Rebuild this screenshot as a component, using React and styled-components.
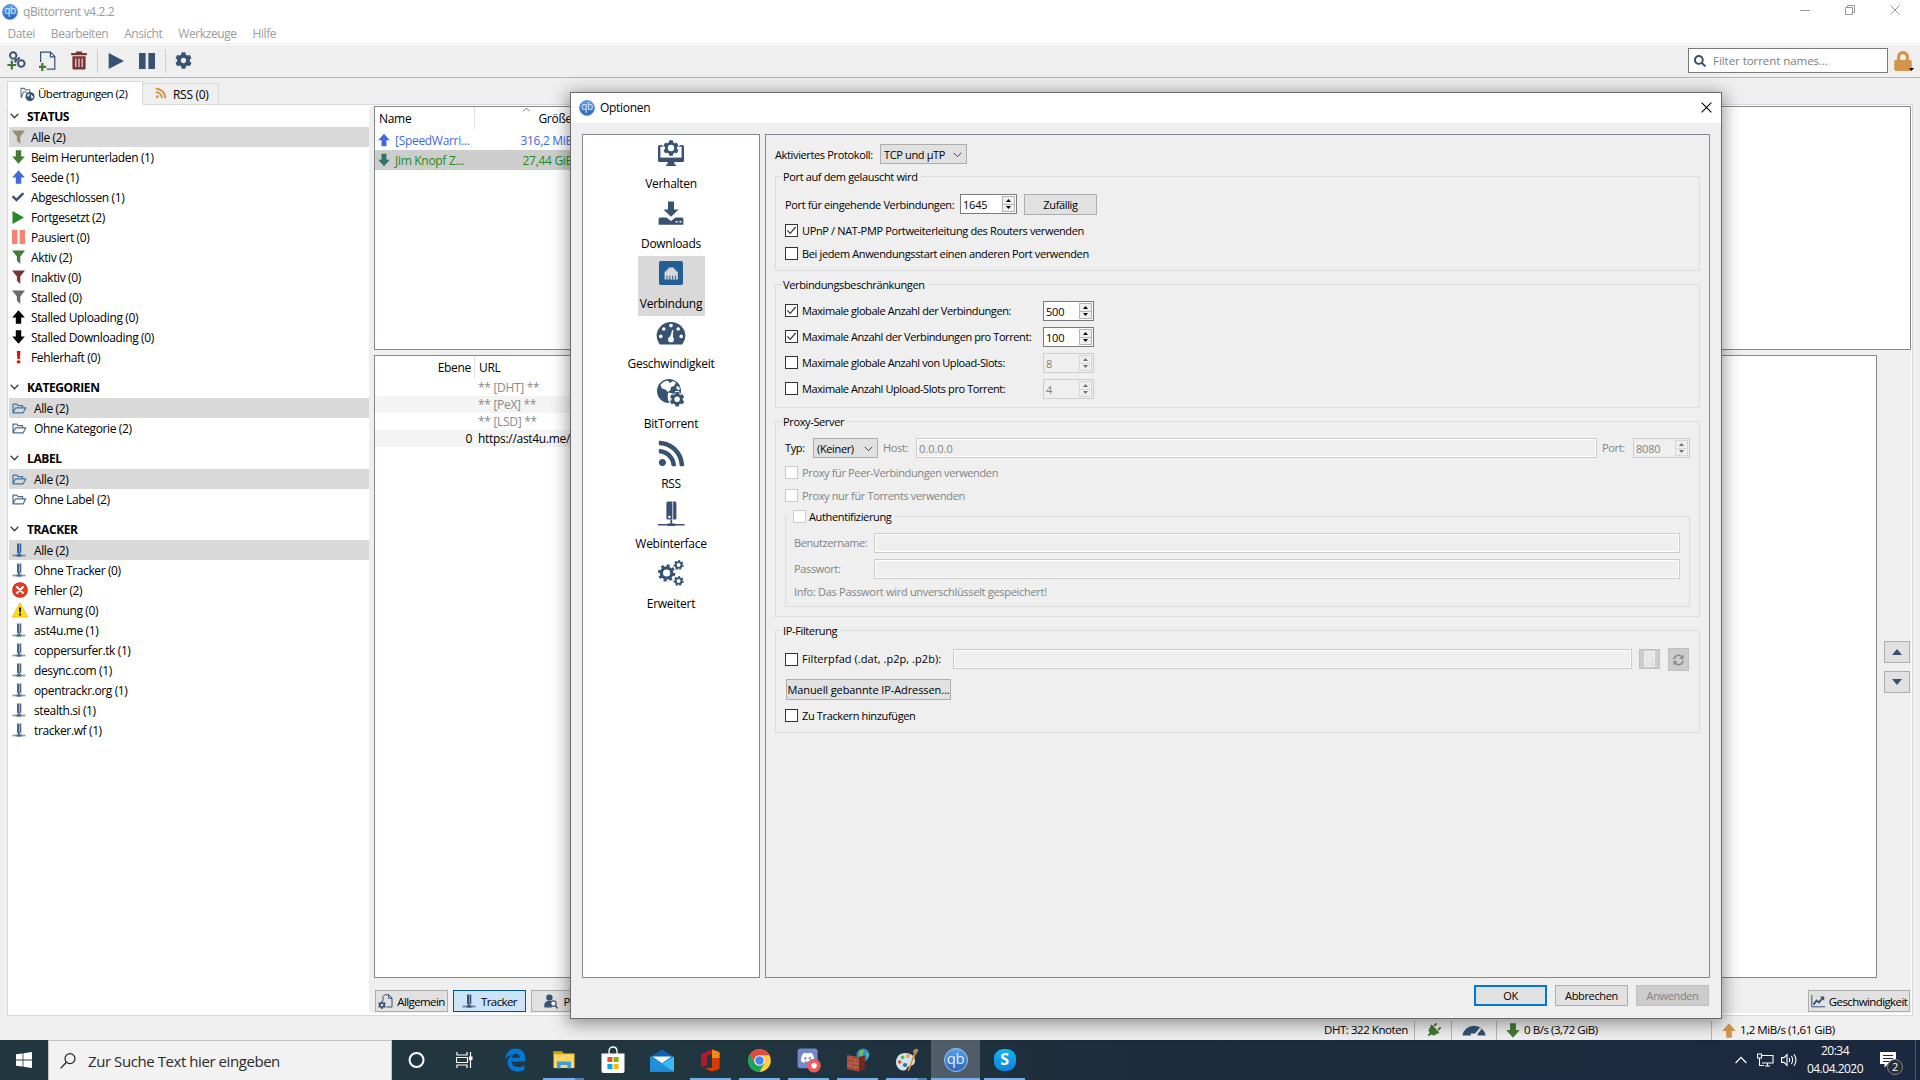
import React from "react";
import styled, { createGlobalStyle, css } from "styled-components";
import {
  FaCog, FaRss, FaLock, FaSearch, FaCheck, FaPlug, FaDiscord,
} from "react-icons/fa";

const navy = "#375273";

const Global = createGlobalStyle`
  * { box-sizing: border-box; }
  body { margin: 0; background: #efefef; overflow: hidden; }
  svg { display: block; flex: none; }
`;

const Desktop = styled.div`
  position: relative;
  width: 1920px;
  height: 1080px;
  overflow: hidden;
  display: flex;
  flex-direction: column;
  font: 12px/16px "Open Sans", "Noto Sans", sans-serif;
  letter-spacing: -0.3px;
  color: #000;
  white-space: nowrap;
`;

/* ---------- icons ---------- */

const Svg = ({ w = 16, h, vb = "0 0 16 16", children, ...rest }) => (
  <svg width={w} height={h || w} viewBox={vb} {...rest}>{children}</svg>
);

const Funnel = ({ color }) => (
  <Svg w={13} h={14} vb="0 0 13 14"><path d="M0 0.5H13L8.3 6.5V14L4.9 10.8V6.5Z" fill={color} /></Svg>
);
const ArrowUp = ({ color, w = 13, h = 14 }) => (
  <Svg w={w} h={h} vb="0 0 13 14"><path d="M6.5 0.3L12.8 7.4H9.2V13.7H3.8V7.4H0.2Z" fill={color} /></Svg>
);
const ArrowDown = ({ color, w = 13, h = 14 }) => (
  <Svg w={w} h={h} vb="0 0 13 14"><path d="M6.5 13.7L12.8 6.6H9.2V0.3H3.8V6.6H0.2Z" fill={color} /></Svg>
);
const PlayIcon = ({ color, w, h }) => (
  <Svg w={w} h={h} vb="0 0 14 14" preserveAspectRatio="none"><path d="M0.6 0L14 7L0.6 14Z" fill={color} /></Svg>
);
const PauseIcon = ({ color, w, h }) => (
  <Svg w={w} h={h} vb="0 0 14 14" preserveAspectRatio="none"><path d="M0 0H5.8V14H0ZM8.2 0H14V14H8.2Z" fill={color} /></Svg>
);
const Exclaim = () => (
  <Svg w={13} h={14} vb="0 0 13 14"><path d="M4.8 1H8.4L7.8 9H5.4ZM4.9 10.6H8.3V13.2H4.9Z" fill="#f00" /></Svg>
);
const FolderIcon = ({ color }) => (
  <Svg w={15} h={13} vb="0 0 15 13">
    <path d="M1 10.5V2.2H4.8L6 3.6H10.6V5.6M1 10.8L3.6 5.8H13.8L11.2 10.8Z" fill="none" stroke={color} strokeWidth="1.2" strokeLinejoin="round" />
  </Svg>
);
const ServerIcon = ({ color = navy }) => (
  <Svg w={30} h={28} vb="0 0 30 28">
    <path d="M12 2.4H16.4V20.6H12Q10.4 20.6 10.4 19V4Q10.4 2.400 12 2.400Z" fill={color} />
    <path d="M17.2 2.4H19Q20.4 2.4 20.4 4V19Q20.4 20.600 19 20.600H17.200Z" fill={color} />
    <circle cx="13.4" cy="18" r="1.3" fill="#fff" />
    <path d="M14.400 20.600H16.200V25H14.400ZM2 25H28.600V26.600H2ZM11.400 24.400H19.200V27H11.400Z" fill={color} />
  </Svg>
);
const ServerMini = ({ color = "#4c6484" }) => (
  <Svg w={14} h={14} vb="0 0 14 14">
    <path d="M5 0.5H7.5V10H5ZM8 0.5H9.3V10H8Z" fill={color} />
    <path d="M6 10H8V11.500H6Z" fill={color} />
    <path d="M0.500 11.600H13.500V13.400H0.500Z" fill={color} opacity="0.65" />
    <path d="M4.600 11.400H9.400V13.600H4.600Z" fill={color} />
  </Svg>
);
const ErrorIcon = () => (
  <Svg>
    <circle cx="8" cy="8" r="7.8" fill="#b92617" /><circle cx="8" cy="8" r="6.9" fill="#ee3a20" />
    <path d="M5 5L11 11M11 5L5 11" stroke="#fff" strokeWidth="2.1" strokeLinecap="round" />
  </Svg>
);
const WarnIcon = () => (
  <Svg>
    <path d="M8 0.8L15.6 15H0.4Z" fill="#ffdd0e" stroke="#efb21a" strokeWidth="0.8" strokeLinejoin="round" />
    <path d="M7 5.4H9L8.7 10.6H7.3ZM7.1 11.6H8.9V13.4H7.1Z" fill="#000" />
  </Svg>
);
const Chevron = ({ color = "#3c3c3c", w = 9, h = 6, sw = 1.3 }) => (
  <Svg w={w} h={h} vb="0 0 9 6"><path d="M0.7 0.8L4.5 4.7L8.3 0.8" fill="none" stroke={color} strokeWidth={sw} /></Svg>
);
const CloseX = ({ color, s = 11 }) => (
  <Svg w={s} vb="0 0 11 11"><path d="M0.6 0.6L10.4 10.4M10.4 0.6L0.6 10.4" stroke={color} strokeWidth="1.1" /></Svg>
);
const LinkAdd = () => (
  <Svg w={19} h={19} vb="0 0 19 19">
    <g fill="none" stroke={navy} strokeWidth="1.9">
      <circle cx="6.200" cy="4.400" r="3.200" /><circle cx="14.300" cy="12.600" r="3.300" />
      <path d="M7.400 8.800Q11.400 9.400 12.400 6.200M8.400 11.800Q8.200 8.600 11.400 8" />
    </g>
    <path d="M3.700 9.600H6V12.900H9.200V15.100H6V18.400H3.700V15.100H0.400V12.900H3.700Z" fill="#437a35" />
  </Svg>
);
const FileAdd = () => (
  <Svg w={17} h={20} vb="0 0 17 20">
    <path d="M1.600 11V1.200H11.600L15.800 5.400V18.200H7.800M11.400 1.200V5.800H15.800" fill="none" stroke={navy} strokeWidth="1.200" />
    <path d="M2.200 12H4.400V14.800H7.200V17H4.400V20H2.200V17H0V14.800H2.200Z" fill="#437a35" />
  </Svg>
);
const Trash = () => (
  <Svg w={16} h={19} vb="0 0 16 19">
    <path d="M5 2V0.500H11V2H15.800V4.200H0.200V2ZM1.400 5.200H14.600V17.200Q14.600 18.600 13.200 18.600H2.800Q1.400 18.600 1.400 17.200Z" fill="#7a3434" />
    <path d="M4.800 7.400V16M8 7.400V16M11.200 7.400V16" stroke="#e5d5d4" strokeWidth="1.300" />
  </Svg>
);
const TransferIcon = () => (
  <Svg w={15} h={15} vb="0 0 15 15">
    <path d="M1 10.500V1.400H4.400L5.400 2.800H9.800V5M1.200 11L3.400 5H7" fill="none" stroke="#5b728f" strokeWidth="1.100" />
    <circle cx="10" cy="9.600" r="4.600" fill={navy} />
    <path d="M7 8.300Q8.500 6 10 7Q9 10 7.800 10ZM11 7.500L13.600 10L12 12Q10.400 10.600 11 7.500Z" fill="#dfe6ef" />
  </Svg>
);
const MonitorCog = () => (
  <Svg w={28} h={28} vb="0 0 28 28">
    <rect x="1" y="6" width="26" height="17" rx="1.600" fill={navy} />
    <rect x="3.400" y="7.600" width="21.200" height="11" fill="#fff" />
    <path d="M10.600 23H17.400V25.600H19V27H9V25.600H10.600Z" fill={navy} />
    <FaCog x="4.500" y="-0.500" size="19" color="#fff" />
    <FaCog x="6" y="1" size="16" color={navy} />
    <circle cx="14" cy="9" r="3.200" fill="#fff" />
  </Svg>
);
const DownloadIcon = () => (
  <Svg w={28} h={28} vb="0 0 28 28">
    <path d="M11 2.400H17V10.400H21.600L14 17.800L6.400 10.400H11Z" fill={navy} />
    <path d="M2.600 18.600H9.400L14 22L18.600 18.600H25.400L26.400 20V25.800H1.600V20Z" fill={navy} />
    <path d="M18.600 22.700H20.600M22.400 22.700H24.400" stroke="#fff" strokeWidth="1.600" />
  </Svg>
);
const EthernetIcon = () => (
  <Svg w={28} h={28} vb="0 0 28 28">
    <rect x="2" y="2" width="24" height="24" rx="1.800" fill="#255e93" />
    <path d="M7.600 20.600V12.400H9.400V10.400H11.400V8.400H17V10.400H19V12.400H20.800V20.600Z" fill="#d9d9d9" />
    <path d="M10 16.600V20.600M12.800 16.600V20.600M15.600 16.600V20.600M18.400 16.600V20.600" stroke="#255e93" strokeWidth="1" />
  </Svg>
);
const GaugeIcon = () => (
  <Svg w={30} h={28} vb="0 0 30 28">
    <path d="M3.800 25.400A14.400 13.800 0 1 1 26.200 25.400Z" fill={navy} />
    <g fill="#fff">
      <circle cx="4.800" cy="17.400" r="1.800" /><circle cx="7.800" cy="10" r="1.800" /><circle cx="15" cy="6.600" r="1.800" />
      <circle cx="22.200" cy="10" r="1.800" /><circle cx="25.200" cy="17.400" r="1.800" /><circle cx="15" cy="20.400" r="2.900" />
      <path d="M13.800 19L16.200 11L17.400 11.300L16.600 20Z" />
    </g>
  </Svg>
);
const GlobeCog = () => (
  <Svg w={30} h={30} vb="0 0 30 30">
    <circle cx="13" cy="13" r="12" fill={navy} />
    <path d="M4.400 7Q8 2.600 12 2.800L14 5L17 3L20 4.400L18 8L15 9L14.400 12L12 14L9.400 11.400L6 10.400ZM12.400 14.400L17 15.600L15.600 20L13 24Q10.600 19 12.400 14.400ZM20.400 8L23.400 9L23.800 12L20.800 11.400Z" fill="#fff" />
    <FaCog x="12.400" y="12.600" size="17.400" color="#fff" />
    <FaCog x="13.600" y="13.800" size="15" color={navy} />
    <circle cx="21.100" cy="21.300" r="2.700" fill="#fff" />
  </Svg>
);
const GearsIcon = () => (
  <Svg w={28} h={28} vb="0 0 28 28">
    <circle cx="9.600" cy="14" r="5.200" fill="none" stroke={navy} strokeWidth="3.200" />
    <circle cx="9.600" cy="14" r="7.200" fill="none" stroke={navy} strokeWidth="3" strokeDasharray="2.830 2.820" />
    {[6, 22].map((cy) => (
      <g key={cy} fill="none" stroke={navy}>
        <circle cx="21.600" cy={cy} r="2.900" strokeWidth="1.900" />
        <circle cx="21.600" cy={cy} r="4.200" strokeWidth="1.800" strokeDasharray="1.880 1.890" />
      </g>
    ))}
  </Svg>
);
const DocCog = () => (
  <Svg w={15} h={15} vb="0 0 15 15">
    <path d="M5 7V2.400L6.600 0.800H10.800L14 4V13H8.400M10.600 0.800V4.200H14" fill="none" stroke={navy} strokeWidth="1" />
    <FaCog x="0" y="7" size="8" color={navy} />
  </Svg>
);
const PeerIcon = () => (
  <Svg w={14} h={15} vb="0 0 14 15">
    <circle cx="5.400" cy="3.600" r="3.200" fill={navy} /><path d="M0.400 13.400V9.800Q1 7.400 3.600 7H7L8 13.400Z" fill={navy} />
    <circle cx="9.400" cy="9.600" r="2.700" fill="#fff" stroke={navy} strokeWidth="1.200" /><path d="M11.200 11.600L13.600 14.400" stroke={navy} strokeWidth="1.500" />
  </Svg>
);
const ChartIcon = () => (
  <Svg w={14} h={13} vb="0 0 14 13">
    <path d="M0.800 0V11.800H14" fill="none" stroke={navy} strokeWidth="1" />
    <path d="M2.400 9.600L5.600 5.600L8 7.400L12 2.600" fill="none" stroke={navy} strokeWidth="1.900" /><path d="M9 1.600H13.200V5.800Z" fill={navy} />
  </Svg>
);
const HalfGauge = () => (
  <Svg w={24} h={12} vb="0 0 24 12">
    <path d="M0.400 11.600A11.700 11.400 0 0 1 23.600 11.600H15.400L16 9.600H8.600L9 11.600Z" fill={navy} />
    <path d="M12.600 11.600L18.800 4.400" stroke="#efefef" strokeWidth="2.200" /><path d="M10.800 11.600A2.300 2.300 0 0 1 14.400 11.600Z" fill="#efefef" />
  </Svg>
);

const QbBadge = styled.span`
  flex: none;
  display: flex;
  align-items: center;
  justify-content: center;
  width: ${(p) => p.$s}px;
  height: ${(p) => p.$s}px;
  border-radius: 50%;
  border: ${(p) => (p.$s > 20 ? "1.5px solid #9fc6f3" : "1px solid #5c97dd")};
  background: linear-gradient(#5b9ee9, #2b66bd);
  color: #e3effc;
  font-size: ${(p) => p.$s * 0.62}px;
  line-height: 1;
  letter-spacing: -0.4px;
  padding-bottom: ${(p) => p.$s * 0.1}px;
`;

/* ---------- main window ---------- */

const AppWindow = styled.div`
  height: 1040px;
  display: flex;
  flex-direction: column;
  background: #efefef;
`;
const TitleBar = styled.div`
  height: 24px;
  background: #fff;
  display: flex;
  align-items: center;
  padding-left: 2px;
  color: #999;
`;
const TitleText = styled.span`
  margin-left: 5px;
  flex: 1;
  letter-spacing: -0.38px;
`;
const WindowButtons = styled.div`
  display: flex;
  align-items: center;
  gap: 35px;
  padding: 0 20px 4px 0;
`;
const MenuBar = styled.div`
  height: 19px;
  background: #fff;
  display: flex;
  align-items: center;
  gap: 16px;
  padding: 0 0 0 7.5px;
  color: #9c9c9c;
  letter-spacing: -0.42px;
`;
const ToolBar = styled.div`
  height: 35px;
  border-top: 1px solid #ececec;
  border-bottom: 1px solid #b8b8b8;
  box-shadow: inset 0 1px 0 #fff;
  display: flex;
  align-items: center;
  padding: 0 5px 0 7px;
`;
const Tool = styled.span`
  width: ${(p) => p.$w}px;
  flex: none;
`;
const ToolSep = styled.span`
  width: 1px;
  height: 24px;
  margin-right: ${(p) => p.$mr}px;
  background: #cfcfcf;
`;
const FilterBox = styled.div`
  margin-left: auto;
  width: 200px;
  height: 25px;
  margin-right: 6px;
  border: 1px solid #7a7a7a;
  background: #fff;
  display: flex;
  align-items: center;
  gap: 7px;
  padding-left: 5px;
  font-size: 11.5px;
  letter-spacing: -0.05px;
  color: #7d7d7d;
`;
const LockWrap = styled.div`
  display: flex;
  align-items: flex-end;
  width: 22px;
  margin-left: -1px;
  svg + svg { margin: 0 0 0 -4px; }
`;

const TabRow = styled.div`
  height: 26px;
  display: flex;
  align-items: flex-end;
  padding-left: 7px;
`;
const Tab = styled.div`
  position: relative;
  z-index: 1;
  display: flex;
  align-items: center;
  border: 1px solid #d9d9d9;
  ${(p) => p.$on
    ? css`height: 24px; width: 136px; margin-bottom: -1px; background: #fff; border-bottom-color: #fff; padding: 2px 0 0 12px; gap: 3px; font-size: 11.5px; letter-spacing: -0.52px;`
    : css`height: 21px; width: 76px; border-left: 0; border-bottom: 0; padding: 2px 0 0 12px; gap: 6px; svg { margin-top: -4px; }`}
`;
const Pane = styled.div`
  height: 912px;
  width: 1906px;
  margin-left: 7px;
  border: 1px solid #d9d9d9;
  background: #fff;
  padding: 1px 1px 2px;
  display: flex;
`;
const Sidebar = styled.div`
  width: 360px;
  padding-top: 1px;
`;
const SideHead = styled.div`
  height: ${(p) => p.$h || 31}px;
  display: flex;
  align-items: flex-end;
  gap: 8px;
  padding: 0 0 2px 1px;
  font-weight: 700;
  letter-spacing: -0.4px;
  svg { margin-bottom: 6px; }
`;
const SideRow = styled.div`
  height: 20px;
  display: flex;
  align-items: center;
  background: ${(p) => (p.$on ? "#d9d9d9" : "none")};
  padding: 2px 0 0 3px;
  letter-spacing: -0.38px;
`;
const SideIcon = styled.span`
  width: ${(p) => p.$w}px;
  flex: none;
  display: flex;
  margin-top: -2px;
`;
const RightCol = styled.div`
  width: 1542px;
  padding-left: 5px;
  background: #efefef;
`;
const ListFrame = styled.div`
  width: ${(p) => p.$w}px;
  height: ${(p) => p.$h}px;
  border: 1px solid #828790;
  background: #fff;
`;
const ListHead = styled.div`
  height: 23px;
  display: flex;
`;
const HeadCell = styled.div`
  width: ${(p) => p.$w}px;
  padding: ${(p) => p.$p || "4px 4px 0"};
  text-align: ${(p) => p.$a || "left"};
  border-right: ${(p) => (p.$line ? "1px solid #e3e3e3" : "0")};
`;
const SortMark = styled.div`
  display: flex;
  justify-content: center;
  padding-left: 6px;
  height: 4px;
  svg { transform: rotate(180deg); }
`;
const TorrentRow = styled.div`
  width: 500px;
  height: 20px;
  display: flex;
  align-items: center;
  padding-left: 3px;
  color: ${(p) => p.$c};
  background: ${(p) => (p.$on ? "#cdcdcd" : "none")};
  span { padding-top: 2px; }
`;
const TorrentName = styled.span`
  width: 80px;
  margin-left: 5px;
`;
const TorrentSize = styled.span`
  width: 98px;
  text-align: right;
`;
const TrackRow = styled.div`
  width: 500px;
  height: 17px;
  line-height: 17px;
  display: flex;
  gap: 6px;
  color: ${(p) => (p.$dark ? "#000" : "#8a8a8a")};
  background: ${(p) => (p.$alt ? "#f4f4f4" : "#fff")};
`;
const TrackTier = styled.span`
  width: 97px;
  text-align: right;
`;
const LowerRow = styled.div`
  display: flex;
  margin-top: 5px;
`;
const MoveButtons = styled.div`
  display: flex;
  flex-direction: column;
  gap: 8px;
  padding: 286px 0 0 7px;
`;
const FlatButton = styled.div`
  width: ${(p) => p.$w}px;
  height: ${(p) => p.$h || 22}px;
  display: flex;
  align-items: center;
  justify-content: center;
  gap: ${(p) => p.$gap || 0}px;
  background: #e1e1e1;
  border: 1px solid #adadad;
  ${(p) => p.$on && css`background: #cce4f7; border-color: #005499;`}
  ${(p) => p.$default && css`border: 2px solid #0078d7;`}
  ${(p) => p.$off && css`background: #cccccc; border-color: #bfbfbf; color: #838383;`}
`;
const DetailButtons = styled.div`
  display: flex;
  gap: 5px;
  padding: 12px 1px 0 1px;
  font-size: 11.5px;
  letter-spacing: -0.6px;
  > div { padding-top: 2px; }
  svg { margin-top: -2px; }
  > :last-child { margin-left: auto; }
`;
const StatusBar = styled.div`
  height: 24px;
  display: flex;
  align-items: center;
  padding: 4px 0 0 1324px;
`;
const StatusItem = styled.div`
  width: ${(p) => p.$w}px;
  display: flex;
  align-items: center;
  gap: 4px;
  padding-left: ${(p) => p.$pl || 0}px;
  font-size: 11.5px;
  letter-spacing: -0.45px;
  height: 19px;
  border-right: ${(p) => (p.$line ? "1px solid #b5b5b5" : 0)};
`;

/* ---------- dialog ---------- */

const Dialog = styled.div`
  position: absolute;
  left: 570px;
  top: 92px;
  width: 1152px;
  height: 927px;
  border: 1px solid #6b6b6b;
  background: #efefef;
  box-shadow: 0 3px 16px 2px rgba(0, 0, 0, 0.4);
  display: flex;
  flex-direction: column;
  font-size: 11px;
  letter-spacing: -0.36px;
`;
const DialogTitle = styled.div`
  height: 30px;
  flex: none;
  background: #fff;
  display: flex;
  align-items: center;
  gap: 5px;
  padding: 0 9px 0 8px;
  font-size: 12px;
  letter-spacing: -0.3px;
  > :last-child { margin-left: auto; margin-top: -2px; }
`;
const DialogBody = styled.div`
  display: flex;
  gap: 5px;
  padding: 11px 0 0 11px;
`;
const NavList = styled.div`
  width: 178px;
  height: 844px;
  border: 1px solid #828790;
  background: #fff;
  padding-top: 1px;
  display: flex;
  flex-direction: column;
  align-items: center;
  font-size: 12px;
  letter-spacing: -0.28px;
`;
const NavItem = styled.div`
  height: 60px;
  min-width: 67px;
  display: flex;
  flex-direction: column;
  align-items: center;
  justify-content: space-between;
  padding: 2px 0 4px;
  background: ${(p) => (p.$on ? "#d9d9d9" : "none")};
`;
const NavIcon = styled.span`
  height: 30px;
  display: flex;
  align-items: center;
`;
const Panel = styled.div`
  width: 945px;
  height: 844px;
  border: 1px solid #828790;
  padding: 9px 9px 0;
`;
const Row = styled.div`
  display: flex;
  align-items: center;
  height: ${(p) => p.$h || 20}px;
  margin-top: ${(p) => p.$mt || 0}px;
  color: ${(p) => (p.$off ? "#838383" : "#000")};
`;
const Label = styled.span`
  width: ${(p) => p.$w}px;
  flex: none;
  padding-top: ${(p) => p.$pt || 0}px;
  color: ${(p) => (p.$off ? "#838383" : "inherit")};
  letter-spacing: ${(p) => (p.$ls === undefined ? "inherit" : `${p.$ls}px`)};
`;
const Combo = styled.div`
  width: ${(p) => p.$w}px;
  height: 20px;
  border: 1px solid #adadad;
  background: #e1e1e1;
  display: flex;
  align-items: center;
  justify-content: space-between;
  padding: 1px 4px 0 3px;
  margin-right: ${(p) => p.$mr || 0}px;
`;
const SpinFrame = styled.div`
  width: ${(p) => p.$w}px;
  height: 20px;
  border: 1px solid ${(p) => (p.$off ? "#cccccc" : "#7a7a7a")};
  background: ${(p) => (p.$off ? "#efefef" : "#fff")};
  color: ${(p) => (p.$off ? "#838383" : "#000")};
  display: flex;
  align-items: center;
  justify-content: space-between;
  padding: 0 1px 0 2px;
  letter-spacing: -0.2px;
  > span { padding-top: 1px; }
`;
const SpinButtons = styled.div`
  display: grid;
  grid-template-rows: 7px 7px;
  height: 16px;
  width: 13px;
  border: 1px solid ${(p) => (p.$off ? "#d6d6d6" : "#b4b4b4")};
  background: linear-gradient(transparent 7px, ${(p) => (p.$off ? "#d6d6d6" : "#b4b4b4")} 7px 8px, transparent 8px), #efefef;
  svg { margin: auto; }
`;
const Group = styled.div`
  height: ${(p) => p.$h}px;
  margin-top: ${(p) => p.$mt}px;
  border: 1px solid #dcdcdc;
  padding: 0 ${(p) => p.$px || 9}px;
`;
const GroupTitle = styled.div`
  width: fit-content;
  height: 16px;
  margin: -8px 0 0 ${(p) => (p.$ml === undefined ? -3 : p.$ml)}px;
  padding: 0 3px 0 ${(p) => p.$pl || 1}px;
  background: #efefef;
  display: flex;
  align-items: center;
`;
const Box = styled.span`
  width: 13px;
  height: 13px;
  flex: none;
  margin: 0 ${(p) => p.$mr || 4}px ${(p) => (p.$mb === undefined ? 1 : p.$mb)}px 0;
  border: 1px solid ${(p) => (p.$off ? "#cccccc" : "#333")};
  background: #fff;
`;
const Input = styled.div`
  width: ${(p) => p.$w}px;
  height: 20px;
  border: 1px solid #cccccc;
  box-shadow: inset 0 0 0 1px #fff;
  background: #efefef;
  color: #838383;
  padding: 2px 2px 0;
  letter-spacing: 0;
  margin-right: ${(p) => p.$mr || 0}px;
`;
const DialogButtons = styled.div`
  display: flex;
  justify-content: flex-end;
  gap: 8px;
  padding: 7px 12px 0 0;
`;
const RandomButton = styled(FlatButton)`
  margin-left: 7px;
  padding-top: 1px;
`;
const RefreshButton = styled(FlatButton)`
  margin-left: 8px;
  align-self: flex-start;
`;
const BanButton = styled(FlatButton)`
  margin-left: 1px;
  letter-spacing: -0.1px;
`;

const Spin = ({ w, value, off }) => (
  <SpinFrame $w={w} $off={off}>
    <span>{value}</span>
    <SpinButtons $off={off}>
      <Svg w={5} h={3} vb="0 0 5 3"><path d="M0 3L2.500 0L5 3Z" fill={off ? "#6f6f6f" : "#000"} /></Svg>
      <Svg w={5} h={3} vb="0 0 5 3"><path d="M0 0L2.500 3L5 0Z" fill={off ? "#6f6f6f" : "#000"} /></Svg>
    </SpinButtons>
  </SpinFrame>
);
const Check = ({ on, off, children, w, ls, mb }) => (
  <>
    <Box $off={off} $mb={mb}>{on && <Svg w={11} vb="0 0 11 11"><path d="M1.400 5.400L4.200 8.400L9.600 2" fill="none" stroke="#333" strokeWidth="1.200" /></Svg>}</Box>
    <Label $w={w} $ls={ls}>{children}</Label>
  </>
);

/* ---------- taskbar ---------- */

const Taskbar = styled.div`
  height: 40px;
  display: flex;
  background: linear-gradient(90deg, #213840 0%, #21363f 35%, #1d2c3d 60%, #1b2940 100%);
  color: #fff;
`;
const StartButton = styled.div`
  width: 48px;
  padding: 12px 0 0 16px;
`;
const SearchBox = styled.div`
  width: 344px;
  display: flex;
  align-items: center;
  gap: 12px;
  padding: 0 0 0 11px;
  background: #f2f2f2;
  border: 1px solid #c3c3c3;
  border-bottom: 0;
  color: #2b2b2b;
  font-size: 15px;
  letter-spacing: -0.43px;
`;
const TaskItem = styled.div`
  position: relative;
  width: 49px;
  display: flex;
  align-items: center;
  justify-content: center;
  background: ${(p) => (p.$active ? "rgba(255,255,255,0.22)" : "none")};
  &::after {
    content: "";
    display: ${(p) => (p.$run ? "block" : "none")};
    position: absolute;
    bottom: 0;
    left: ${(p) => (p.$active ? 0 : 4)}px;
    right: ${(p) => (p.$active ? 0 : 4)}px;
    height: 2px;
    background: ${(p) => (p.$multi ? "linear-gradient(90deg,#74b0f4 0 32px,#4f80b8 32px)" : "#74b0f4")};
  }
`;
const Tray = styled.div`
  margin-left: auto;
  display: flex;
  align-items: center;
  padding-right: 4px;
`;
const TrayGlyph = styled.span`
  width: ${(p) => p.$w}px;
  display: flex;
`;
const Clock = styled.div`
  width: 74px;
  text-align: center;
  line-height: 18px;
  letter-spacing: -0.5px;
  margin: 0 8px 0 0;
`;
const Notify = styled.div`
  position: relative;
  width: 36px;
  height: 40px;
  padding: 12px 0 0;
  border-right: 1px solid #4c5868;
`;
const NotifyCount = styled.span`
  position: absolute;
  left: 7px;
  top: 19px;
  width: 16px;
  height: 16px;
  border-radius: 50%;
  border: 1px solid #7d838c;
  background: #2a2d33;
  font-size: 11px;
  line-height: 14px;
  text-align: center;
`;
const SkypeMark = styled.span`
  width: 22px;
  height: 22px;
  border-radius: 9px;
  background: linear-gradient(#14b4f4, #0a84dc);
  font: 700 16px/21px "Open Sans", sans-serif;
  text-align: center;
`;

const statusRows = [
  [<Funnel color="#998d74" />, "Alle (2)"],
  [<ArrowDown color="#437a35" />, "Beim Herunterladen (1)"],
  [<ArrowUp color="#4169e1" />, "Seede (1)"],
  [<FaCheck size={12} color={navy} />, "Abgeschlossen (1)"],
  [<PlayIcon color="#228b22" w={12} h={13} />, "Fortgesetzt (2)"],
  [<PauseIcon color="#fa8072" w={13} h={14} />, "Pausiert (0)"],
  [<Funnel color="#437a35" />, "Aktiv (2)"],
  [<Funnel color="#7a3434" />, "Inaktiv (0)"],
  [<Funnel color="#6b6b6b" />, "Stalled (0)"],
  [<ArrowUp color="#000" />, "Stalled Uploading (0)"],
  [<ArrowDown color="#000" />, "Stalled Downloading (0)"],
  [<Exclaim />, "Fehlerhaft (0)"],
];
const trackerRows = [
  ["Alle (2)"], ["Ohne Tracker (0)"], ["Fehler (2)", "e"], ["Warnung (0)", "w"], ["ast4u.me (1)"],
  ["coppersurfer.tk (1)"], ["desync.com (1)"], ["opentrackr.org (1)"], ["stealth.si (1)"], ["tracker.wf (1)"],
];
const navItems = [
  ["Verhalten", <MonitorCog />], ["Downloads", <DownloadIcon />], ["Verbindung", <EthernetIcon />],
  ["Geschwindigkeit", <GaugeIcon />], ["BitTorrent", <GlobeCog />], ["RSS", <FaRss size={29} color={navy} />],
  ["Webinterface", <ServerIcon />], ["Erweitert", <GearsIcon />],
];

const FolderSection = ({ title, rows }) => (
  <>
    <SideHead><Chevron />{title}</SideHead>
    {rows.map((r, i) => (
      <SideRow key={r} $on={i === 0}>
        <SideIcon $w={22}><FolderIcon color={i === 0 ? "#3f74a4" : "#526c8c"} /></SideIcon>{r}
      </SideRow>
    ))}
  </>
);

const SideNav = () => (
  <Sidebar>
    <SideHead $h={20}><Chevron />STATUS</SideHead>
    {statusRows.map(([icon, text], i) => (
      <SideRow key={text} $on={i === 0}><SideIcon $w={19}>{icon}</SideIcon>{text}</SideRow>
    ))}
    <FolderSection title="KATEGORIEN" rows={["Alle (2)", "Ohne Kategorie (2)"]} />
    <FolderSection title="LABEL" rows={["Alle (2)", "Ohne Label (2)"]} />
    <SideHead><Chevron />TRACKER</SideHead>
    {trackerRows.map(([text, kind], i) => (
      <SideRow key={text} $on={i === 0}>
        <SideIcon $w={22}>
          {kind === "e" ? <ErrorIcon /> : kind === "w" ? <WarnIcon /> : <ServerMini color={i ? "#4c6484" : "#2f6596"} />}
        </SideIcon>{text}
      </SideRow>
    ))}
  </Sidebar>
);

const MainPane = () => (
  <RightCol>
    <ListFrame $w={1537} $h={244}>
      <ListHead>
        <HeadCell $w={100} $line>Name</HeadCell>
        <HeadCell $w={100} $p="0 3px 0 0" $a="right">
          <SortMark><Chevron w={9} h={5} color="#555" sw={1} /></SortMark>Größe
        </HeadCell>
      </ListHead>
      <TorrentRow $c="#4169e1"><ArrowUp color="#4169e1" w={12} /><TorrentName>[SpeedWarri...</TorrentName><TorrentSize>316,2 MiB</TorrentSize></TorrentRow>
      <TorrentRow $c="#228b22" $on><ArrowDown color="#2f7566" w={12} /><TorrentName>Jim Knopf Z...</TorrentName><TorrentSize>27,44 GiB</TorrentSize></TorrentRow>
    </ListFrame>
    <LowerRow>
      <ListFrame $w={1503} $h={623}>
        <ListHead>
          <HeadCell $w={100} $a="right" $p="4px 3px 0" $line>Ebene</HeadCell>
          <HeadCell $w={100} $p="4px 4px 0">URL</HeadCell>
        </ListHead>
        {["DHT", "PeX", "LSD"].map((n, i) => (
          <TrackRow key={n} $alt={i === 1}><TrackTier /><span>** [{n}] **</span></TrackRow>
        ))}
        <TrackRow $alt $dark><TrackTier>0</TrackTier><span>https://ast4u.me/</span></TrackRow>
      </ListFrame>
      <MoveButtons>
        <FlatButton $w={26}><Svg w={10} h={6} vb="0 0 10 6"><path d="M0 6L5 0L10 6Z" fill={navy} /></Svg></FlatButton>
        <FlatButton $w={26}><Svg w={10} h={6} vb="0 0 10 6"><path d="M0 0L5 6L10 0Z" fill={navy} /></Svg></FlatButton>
      </MoveButtons>
    </LowerRow>
    <DetailButtons>
      <FlatButton $w={73} $gap={4}><DocCog />Allgemein</FlatButton>
      <FlatButton $w={73} $gap={5} $on><ServerMini color={navy} />Tracker</FlatButton>
      <FlatButton $w={73} $gap={5}><PeerIcon />Peers</FlatButton>
      <FlatButton $w={102} $gap={4}><ChartIcon />Geschwindigkeit</FlatButton>
    </DetailButtons>
  </RightCol>
);

const Limit = ({ on, text, value, mt }) => (
  <Row $mt={mt}><Check on={on} w={241} ls={-0.41}>{text}</Check><Spin w={51} value={value} off={!on} /></Row>
);

const OptionsDialog = () => (
  <Dialog>
    <DialogTitle><QbBadge $s={16}>qb</QbBadge><span>Optionen</span><CloseX color="#000" /></DialogTitle>
    <DialogBody>
      <NavList>
        {navItems.map(([t, icon]) => (
          <NavItem key={t} $on={t === "Verbindung"}><NavIcon>{icon}</NavIcon>{t}</NavItem>
        ))}
      </NavList>
      <Panel>
        <Row>
          <Label $w={105} $pt={2}>Aktiviertes Protokoll:</Label>
          <Combo $w={87}>TCP und µTP<Chevron color="#444" sw={1} /></Combo>
        </Row>
        <Group $mt={12} $h={95}>
          <GroupTitle>Port auf dem gelauscht wird</GroupTitle>
          <Row $mt={9}>
            <Label $w={175} $pt={2}>Port für eingehende Verbindungen:</Label>
            <Spin w={57} value="1645" />
            <RandomButton $w={73} $h={21}>Zufällig</RandomButton>
          </Row>
          <Row $mt={7}><Check on>UPnP / NAT-PMP Portweiterleitung des Routers verwenden</Check></Row>
          <Row $mt={3}><Check>Bei jedem Anwendungsstart einen anderen Port verwenden</Check></Row>
        </Group>
        <Group $mt={13} $h={124}>
          <GroupTitle>Verbindungsbeschränkungen</GroupTitle>
          <Limit mt={8} on text="Maximale globale Anzahl der Verbindungen:" value="500" />
          <Limit mt={6} on text="Maximale Anzahl der Verbindungen pro Torrent:" value="100" />
          <Limit mt={6} text="Maximale globale Anzahl von Upload-Slots:" value="8" />
          <Limit mt={6} text="Maximale Anzahl Upload-Slots pro Torrent:" value="4" />
        </Group>
        <Group $mt={13} $h={196}>
          <GroupTitle>Proxy-Server</GroupTitle>
          <Row $mt={8}>
            <Label $w={28}>Typ:</Label>
            <Combo $w={65} $mr={5}>(Keiner)<Chevron color="#444" sw={1} /></Combo>
            <Label $w={33} $off>Host:</Label>
            <Input $w={681} $mr={5}>0.0.0.0</Input>
            <Label $w={31} $off>Port:</Label>
            <Spin w={57} value="8080" off />
          </Row>
          <Row $mt={5} $off><Check off>Proxy für Peer-Verbindungen verwenden</Check></Row>
          <Row $mt={3} $off><Check off>Proxy nur für Torrents verwenden</Check></Row>
          <Group $mt={10} $h={91} $px={8}>
            <GroupTitle $ml={-5} $pl={4}><Box $off $mr={3} />Authentifizierung</GroupTitle>
            <Row $mt={8} $off><Label $w={80} $ls={-0.42}>Benutzername:</Label><Input $w={806} /></Row>
            <Row $mt={6} $off><Label $w={80}>Passwort:</Label><Input $w={806} /></Row>
            <Row $mt={3} $off><Label $ls={-0.3}>Info: Das Passwort wird unverschlüsselt gespeichert!</Label></Row>
          </Group>
        </Group>
        <Group $mt={13} $h={103}>
          <GroupTitle>IP-Filterung</GroupTitle>
          <Row $mt={9} $h={22}>
            <Check w={151} ls={0.05} mb={-1}>Filterpfad (.dat, .p2p, .p2b):</Check>
            <Input $w={679} $mr={7} />
            <FlatButton $w={21} $h={20} $off><Svg w={11} h={16} vb="0 0 11 16"><path d="M0.500 0.500H10.500V15.500H0.500Z" fill="#e6e6e6" stroke="#f0f0f0" /><path d="M8.500 15V10L10.500 9" stroke="#d4d4d4" fill="none" /></Svg></FlatButton>
            <RefreshButton $w={21} $h={23} $off>
              <Svg w={11} h={12} vb="0 0 11 12">
                <path d="M1 5.400A4.500 4.500 0 0 1 9 3M10 6.600A4.500 4.500 0 0 1 2 9" fill="none" stroke="#8c8c8c" strokeWidth="1.600" />
                <path d="M10.600 0.600V5H6.400ZM0.400 11.400V7H4.600Z" fill="#8c8c8c" />
              </Svg>
            </RefreshButton>
          </Row>
          <Row $mt={9} $h={21}><BanButton $w={165} $h={21}>Manuell gebannte IP-Adressen...</BanButton></Row>
          <Row $mt={6}><Check>Zu Trackern hinzufügen</Check></Row>
        </Group>
      </Panel>
    </DialogBody>
    <DialogButtons>
      <FlatButton $w={73} $h={21} $default>OK</FlatButton>
      <FlatButton $w={73} $h={21}>Abbrechen</FlatButton>
      <FlatButton $w={73} $h={21} $off>Anwenden</FlatButton>
    </DialogButtons>
  </Dialog>
);

const EdgeIcon = () => (
  <Svg w={22} h={24} vb="0 0 22 24">
    <path d="M1 11.400C2 4 6.400 0.600 11.600 0.600C18 0.600 21.400 5.200 21.400 10.600V13.600H7.400C7.800 17.400 11 19 14.200 19C16.800 19 18.800 18.200 20.400 17.200V21.800C18.400 22.900 15.800 23.400 13.400 23.400C7.400 23.400 3.600 19.600 3.600 14.600C3.600 11 5.800 8 9.200 6.800C5.600 7 2.800 8.800 1 11.400ZM7.600 9.800H15.600C15.600 7.600 14.400 5.800 11.800 5.800C9.400 5.800 7.900 7.600 7.600 9.800Z" fill="#0078d7" />
  </Svg>
);
const ExplorerIcon = () => (
  <Svg w={22} h={18} vb="0 0 22 18">
    <path d="M0.500 0.500H9L10.500 2.500H21.500V17H0.500Z" fill="#f8c93b" /><path d="M0.500 0.500H9L10 3H0.500Z" fill="#dd9b0c" /><path d="M1 4H21V17H1Z" fill="#fdd667" />
    <path d="M4 17.600V10.600H18V17.600H14.400V14H7.600V17.600Z" fill="#3f9de0" />
  </Svg>
);
const StoreIcon = () => (
  <Svg w={24} h={28} vb="0 0 24 28">
    <path d="M8 9V5.400Q8 1 12 1Q16 1 16 5.400V9" fill="none" stroke="#fff" strokeWidth="1.300" />
    <path d="M0.500 7.400H23.500V25Q23.500 27 21.600 27H2.400Q0.500 27 0.500 25Z" fill="#fff" />
    <path d="M6.400 11H11.400V16H6.400Z" fill="#f25022" /><path d="M12.600 11H17.600V16H12.600Z" fill="#7fba00" />
    <path d="M6.400 18H11.400V23H6.400Z" fill="#00a4ef" /><path d="M12.600 18H17.600V23H12.600Z" fill="#ffb900" />
  </Svg>
);
const MailIcon = () => (
  <Svg w={24} h={23} vb="0 0 24 23">
    <path d="M0 8L12 0.400L24 8V12H0Z" fill="#0a63b4" />
    <path d="M0 7.600L12 14.600L24 7.600V22.400H0Z" fill="#37bdf4" /><path d="M2.200 7.600H21.800L12 14.200Z" fill="#f4f7fa" /><path d="M0 7.600L24 22.400H0Z" fill="#1d8fdd" />
  </Svg>
);
const OfficeIcon = () => (
  <Svg w={19} h={23} vb="0 0 19 23">
    <path d="M0.600 5.600L11 0.600L17 2.400Q18.600 3 18.600 4.600V18.800Q18.600 20.400 17 20.800L11 22.600L3.400 19.400L11 18.600V4.800L5.600 6.400V15.800L0.600 18Z" fill="#d83b01" />
    <path d="M0.600 5.600L11 0.600V4.800L5.600 6.400V15.800L0.600 18Z" fill="#b01a2c" /><path d="M11 0.600L17 2.400Q18.600 3 18.600 4.600V9H11Z" fill="#f08a12" />
  </Svg>
);
const ChromeIcon = () => (
  <Svg w={23} vb="0 0 24 24">
    <circle cx="12" cy="12" r="11.800" fill="#ffcd40" />
    <path d="M12 12L7.200 14.800L1.800 6A11.800 11.800 0 0 0 12 23.800L17 15Z" fill="#0f9d58" />
    <path d="M12 12L7.200 14.800L1.800 6A11.800 11.800 0 0 1 22.400 6.400H12Z" fill="#e04a3f" />
    <path d="M1.800 6A11.800 11.800 0 0 0 11.600 23.800L16.600 15H7.200Z" fill="#1da35c" />
    <circle cx="12" cy="12" r="5.600" fill="#f4f4f4" /><circle cx="12" cy="12" r="4.400" fill="#4285f4" />
  </Svg>
);
const DiscordIcon = () => (
  <Svg w={24} h={25} vb="0 0 24 25">
    <rect x="0.600" y="0.600" width="20" height="19.600" rx="3" fill="#7588cb" /><FaDiscord x="3.400" y="2.600" size="14.500" color="#fff" />
    <circle cx="17" cy="17.600" r="6.800" fill="#f05a5c" /><circle cx="17" cy="17.600" r="2.800" fill="#fff" />
  </Svg>
);
const FirewallIcon = () => (
  <Svg w={24} h={24} vb="0 0 24 24">
    <circle cx="17" cy="7" r="6.400" fill="#2f8fd0" /><path d="M13 4Q16 0 18 3L16 7L19 9L17 13Q13 10 13 4ZM20 4L23 7L21 10Z" fill="#6fc63c" />
    <path d="M1 7L13 9L19 7.400V20L13 23.400L1 21Z" fill="#a34a38" /><path d="M13 9L19 7.400V20L13 23.400Z" fill="#6c2c22" />
    <path d="M1 10.400L13 12.400M1 14L13 16M1 17.600L13 19.600M5 8V11M9 11.600V15M4.600 14.600V18M9 18.600V22" stroke="#c98072" strokeWidth="0.500" />
  </Svg>
);
const PaintIcon = () => (
  <Svg w={24} h={24} vb="0 0 24 24">
    <path d="M10 5C4.600 5 1 9.200 1 14.200C1 19 4.600 22.600 9 22.600C12.400 22.600 11 19.400 13.400 18.600C16.600 18 20 17.400 20 12.600C20 8 15.600 5 10 5Z" fill="#cfe4ef" />
    <circle cx="10" cy="17" r="2.100" fill="#3b6b8c" /><circle cx="4.600" cy="14" r="1.800" fill="#e64b3c" /><circle cx="7.600" cy="9.400" r="1.800" fill="#58b947" /><circle cx="13" cy="8" r="1.900" fill="#f6a02e" />
    <path d="M12.600 22.600L18.600 6L20.600 6.800L14 23Z" fill="#f08f2c" /><path d="M18.600 6L18 2.400L21.400 0.400L23.600 2L21 6.800Z" fill="#b38a62" />
  </Svg>
);

const TaskIcons = () => (
  <>
    <TaskItem><Svg w={18}><circle cx="7.600" cy="8" r="6.200" fill="none" stroke="#fff" strokeWidth="1.800" /></Svg></TaskItem>
    <TaskItem>
      <Svg w={19} h={16} vb="0 0 19 16">
        <path d="M1 0V3H11V0M1 16V13H11V16M0.500 5.500H11.500V10.500H0.500ZM14.500 0V16" fill="none" stroke="#fff" strokeWidth="1.200" /><path d="M13 4.500H16.500V8H13Z" fill="#fff" />
      </Svg>
    </TaskItem>
    <TaskItem><EdgeIcon /></TaskItem>
    <TaskItem $run $multi><ExplorerIcon /></TaskItem>
    <TaskItem><StoreIcon /></TaskItem>
    <TaskItem><MailIcon /></TaskItem>
    <TaskItem $run><OfficeIcon /></TaskItem>
    <TaskItem $run><ChromeIcon /></TaskItem>
    <TaskItem $run><DiscordIcon /></TaskItem>
    <TaskItem $run><FirewallIcon /></TaskItem>
    <TaskItem $run $multi><PaintIcon /></TaskItem>
    <TaskItem $run $active><QbBadge $s={24}>qb</QbBadge></TaskItem>
    <TaskItem $run><SkypeMark>S</SkypeMark></TaskItem>
  </>
);

export default function App() {
  return (
    <>
      <Global />
      <Desktop>
        <AppWindow>
          <TitleBar>
            <QbBadge $s={16}>qb</QbBadge>
            <TitleText>qBittorrent v4.2.2</TitleText>
            <WindowButtons>
              <Svg w={10} vb="0 0 10 10"><path d="M0 5.500H10" stroke="#999" /></Svg>
              <Svg w={10} vb="0 0 10 10"><path d="M0.500 2.500H7.500V9.500H0.500ZM2.500 2.500V0.500H9.500V7.500H7.500" fill="none" stroke="#999" /></Svg>
              <CloseX color="#999" s={10} />
            </WindowButtons>
          </TitleBar>
          <MenuBar><span>Datei</span><span>Bearbeiten</span><span>Ansicht</span><span>Werkzeuge</span><span>Hilfe</span></MenuBar>
          <ToolBar>
            <Tool $w={32}><LinkAdd /></Tool>
            <Tool $w={32}><FileAdd /></Tool>
            <Tool $w={26}><Trash /></Tool>
            <ToolSep $mr={10} />
            <Tool $w={31}><PlayIcon color={navy} w={16} h={16} /></Tool>
            <Tool $w={26}><PauseIcon color={navy} w={16} h={16} /></Tool>
            <ToolSep $mr={9} />
            <Tool $w={20}><FaCog size={17} color={navy} /></Tool>
            <FilterBox><FaSearch size={12} color={navy} />Filter torrent names...</FilterBox>
            <LockWrap><FaLock size={20} color="#d2954a" /><Svg w={5} h={3} vb="0 0 5 3"><path d="M0 0H5L2.500 3Z" /></Svg></LockWrap>
          </ToolBar>
          <TabRow>
            <Tab $on><TransferIcon />Übertragungen (2)</Tab>
            <Tab><FaRss size={12} color="#d2954a" />RSS (0)</Tab>
          </TabRow>
          <Pane><SideNav /><MainPane /></Pane>
          <StatusBar>
            <StatusItem $w={91} $line>DHT: 322 Knoten</StatusItem>
            <StatusItem $w={37} $pl={11} $line><FaPlug size={15} color="#437a35" transform="rotate(45)" /></StatusItem>
            <StatusItem $w={45} $pl={10} $line><HalfGauge /></StatusItem>
            <StatusItem $w={215} $pl={9} $line><ArrowDown color="#437a35" w={14} h={15} />0 B/s (3,72 GiB)</StatusItem>
            <StatusItem $w={130} $pl={10}><ArrowUp color="#d2954a" w={14} h={15} />1,2 MiB/s (1,61 GiB)</StatusItem>
          </StatusBar>
        </AppWindow>
        <Taskbar>
          <StartButton>
            <Svg w={16}><path d="M0 2.300L6.600 1.400V7.600H0ZM7.400 1.300L16 0V7.600H7.400ZM0 8.400H6.600V14.600L0 13.700ZM7.400 8.400H16V16L7.400 14.700Z" fill="#fff" /></Svg>
          </StartButton>
          <SearchBox>
            <Svg w={16}><circle cx="10" cy="5.600" r="5" fill="none" stroke="#222" strokeWidth="1.200" /><path d="M6.400 9.200L0.600 15.400" stroke="#222" strokeWidth="1.300" /></Svg>
            Zur Suche Text hier eingeben
          </SearchBox>
          <TaskIcons />
          <Tray>
            <TrayGlyph $w={22}><Svg w={12} h={8} vb="0 0 12 8"><path d="M0.600 7L6 1.400L11.400 7" fill="none" stroke="#fff" strokeWidth="1.200" /></Svg></TrayGlyph>
            <TrayGlyph $w={24}>
              <Svg w={17} h={14} vb="0 0 17 14"><path d="M5 2.500H16V10H5M8 13H13M10.500 10V13M0.500 1H4.500V5H0.500ZM2.500 5V12.500H7" fill="none" stroke="#fff" strokeWidth="1.100" /></Svg>
            </TrayGlyph>
            <TrayGlyph $w={17}>
              <Svg w={17} h={14} vb="0 0 17 14"><path d="M0.600 4.600H3L6 1.600V12.400L3 9.400H0.600ZM8 5Q9.400 7 8 9M10.400 3Q13 7 10.400 11M13 1.200Q17 7 13 12.800" fill="none" stroke="#fff" strokeWidth="1.100" /></Svg>
            </TrayGlyph>
            <Clock>20:34<br />04.04.2020</Clock>
            <Notify>
              <Svg><path d="M0 0H16V12H8L4.500 15.500V12H0Z" fill="#fff" /><path d="M3 3.500H13M3 6.500H13M3 9.500H9" stroke="#1b2940" /></Svg>
              <NotifyCount>2</NotifyCount>
            </Notify>
          </Tray>
        </Taskbar>
        <OptionsDialog />
      </Desktop>
    </>
  );
}
